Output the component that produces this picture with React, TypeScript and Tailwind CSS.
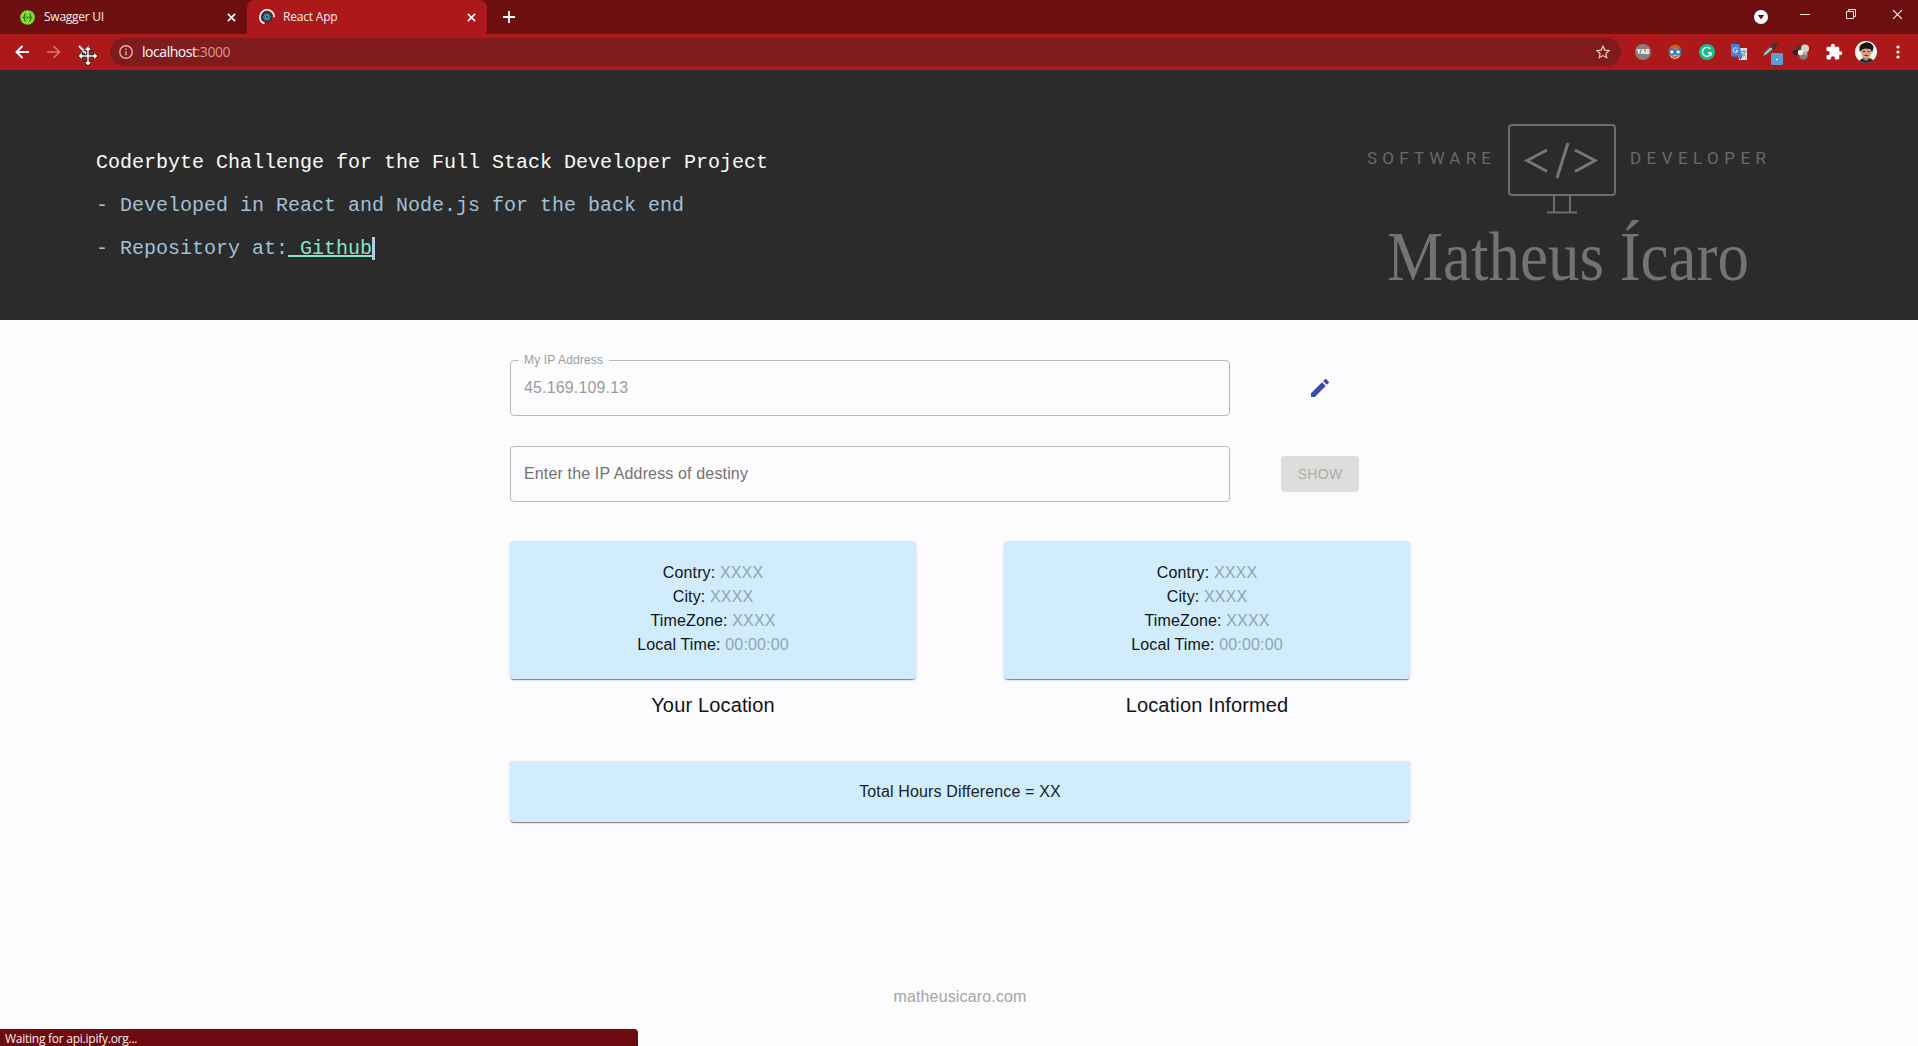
import React from "react";

const UI = "font-['Open_Sans',sans-serif]";

function Cross({ size = 9, width = 1.8 }: { size?: number; width?: number }) {
  return (
    <svg width={size} height={size} viewBox="0 0 10 10" fill="none" stroke="#fff" strokeWidth={width}>
      <path d="M1 1l8 8M9 1L1 9" />
    </svg>
  );
}

function TabStrip() {
  return (
    <div className="flex h-[34px] bg-[#6d0e10] text-[12px] text-[#fbeeee]">
      <div className="flex w-[247px] shrink-0 items-center pl-5">
        <svg className="mr-[9px]" width="15" height="15" viewBox="0 0 15 15">
          <circle cx="7.5" cy="7.5" r="7.3" fill="#7be02f" />
          <path d="M5.8 3.8c-2 0-.6 2.8-2.3 3.7 1.7.9.3 3.7 2.3 3.7M9.2 3.8c2 0 .6 2.8 2.3 3.7-1.7.9-.3 3.7-2.3 3.7" fill="none" stroke="#1d5a25" strokeWidth="1.1" />
          <path d="M5.4 7.5h4.400" stroke="#1d5a25" strokeWidth="1.3" strokeDasharray="1 .7" />
        </svg>
        <span className="w-[183px] tracking-[-0.25px]">Swagger UI</span>
        <Cross />
      </div>
      <div className="relative flex w-[240px] shrink-0 items-center rounded-t-[8px] bg-[#ad191b] pl-[12px]">
        <svg className="mr-[8px]" width="16" height="16" viewBox="0 0 16 16" fill="none">
          <circle cx="8" cy="8" r="5.4" fill="#24303c" />
          <g stroke="#46a7bd" strokeWidth=".8">
            <ellipse cx="8" cy="8" rx="3.8" ry="1.4" />
            <ellipse cx="8" cy="8" rx="3.8" ry="1.4" transform="rotate(60 8 8)" />
            <ellipse cx="8" cy="8" rx="3.8" ry="1.4" transform="rotate(120 8 8)" />
          </g>
          <path d="M5.5 14.6A7.1 7.1 0 0 1 1 7M4 2.1A7.1 7.1 0 0 1 15.1 8.2M1 7A7.1 7.1 0 0 1 4 2.1" stroke="#fff" strokeWidth="1.6" />
        </svg>
        <span className="w-[184px] tracking-[-0.2px]">React App</span>
        <Cross />
      </div>
      <div className="flex flex-1 items-center pl-[16px]">
        <svg width="12" height="12" viewBox="0 0 12 12" stroke="#fff" strokeWidth="1.8">
          <path d="M6 0v12M0 6h12" />
        </svg>
      </div>
      <div className="flex items-start text-white">
        <svg className="mt-[10px] mr-[32px]" width="14" height="14" viewBox="0 0 14 14">
          <circle cx="7" cy="7" r="7" fill="#fff" />
          <path d="M3.8 5h6.4L7 9.4z" fill="#6d0e10" />
        </svg>
        <span className="mt-[14px] mr-[36px] h-px w-[10px] bg-[#ffe9cf]" />
        <svg className="mt-[9px] mr-[36px]" width="10" height="10" viewBox="0 0 10 10" fill="none" stroke="#fde3dc">
          <path d="M.5 2.5h7v7h-7zM2.5 2.5v-2h7v7h-2" />
        </svg>
        <span className="mt-[9px] mr-[15px]">
          <Cross size={11} width={1} />
        </span>
      </div>
    </div>
  );
}

function Extensions() {
  return (
    <div className="flex items-center">
      <span className="flex w-8 justify-center">
        <span className="flex size-4 items-center justify-center rounded-full bg-[#858180] text-[6px] font-extrabold text-white">YAB</span>
      </span>
      <svg className="mx-2" width="16" height="16" viewBox="0 0 16 16">
        <circle cx="8" cy="9" r="6" fill="#e6b184" />
        <path d="M1.6 7C2 2 5 1 9 .8c3 0 5 2.2 5.4 6.2L12 4.6 4 5z" fill="#c26420" />
        <circle cx="4.9" cy="8" r="2.6" fill="#eef6fa" stroke="#2878b8" strokeWidth="1.6" />
        <circle cx="11.1" cy="8" r="2.6" fill="#eef6fa" stroke="#2878b8" strokeWidth="1.6" />
        <path d="M5.5 12.6q2.500 1.500 5 0" stroke="#8a3a28" fill="none" />
      </svg>
      <svg className="mx-2" width="16" height="16" viewBox="0 0 16 16" fill="none">
        <circle cx="8" cy="8" r="8" fill="#15c08c" />
        <path d="M11.300 4.900A4.500 4.500 0 1 0 12.300 9H9M12.300 8.800v2.800" stroke="#fff" strokeWidth="1.400" />
      </svg>
      <svg className="mx-2" width="16" height="16" viewBox="0 0 16 16">
        <path d="M6 4h10v12H8z" fill="#d9dbe0" />
        <path d="M0 0h8l3.500 12.500H0z" fill="#4383e8" />
        <path d="M8 12.500h3.500L9 16z" fill="#2456b0" />
        <path d="M6.300 4.700A2.300 2.300 0 1 0 6.800 6.600H4.800" fill="none" stroke="#fff" />
        <path d="M10.500 7.500h4.500M12.800 6v1.500M14.300 7.500q-.8 3-3 4.500M11.500 9q1 2.200 3 3" fill="none" stroke="#757b84" strokeWidth=".8" />
      </svg>
      <svg className="mr-[6px] ml-[8px] mt-1" width="20" height="22" viewBox="0 0 20 22">
        <path d="M0 13l1-3 6-6 3 2-7 6z" fill="#6aa3a6" />
        <path d="M7 4l4-4h4l-1 3-4 4z" fill="#3c3538" />
        <path d="M2 11l7-6" stroke="#e3eeee" />
        <rect x="8" y="10" width="12" height="12" rx="1.500" fill="#5d9bd3" />
        <path d="M13 16.500h2" stroke="#fff" />
      </svg>
      <svg className="mr-[9px] ml-[3px]" width="17" height="16" viewBox="0 0 17 16">
        <circle cx="11.500" cy="11.500" r="4.300" fill="#85817e" />
        <circle cx="8" cy="5" r="4" fill="#423538" />
        <circle cx="13" cy="4.500" r="4" fill="#d7d4cf" />
        <circle cx="3.500" cy="8.500" r="2.800" fill="#292225" />
        <circle cx="8.500" cy="8.500" r="2.700" fill="#efede9" />
        <circle cx="13.500" cy="9" r="2" fill="#b5b0aa" />
      </svg>
      <svg className="mr-[7px] ml-[7px]" width="18" height="18" viewBox="0 0 24 24" fill="#fff">
        <path d="M20.500 11H19V7c0-1.100-.9-2-2-2h-4V3.500a2.500 2.500 0 0 0-5 0V5H4c-1.100 0-1.990.9-1.990 2v3.800H3.500c1.490 0 2.700 1.210 2.700 2.700s-1.210 2.700-2.700 2.700H2V20c0 1.100.9 2 2 2h3.800v-1.500c0-1.490 1.210-2.700 2.700-2.700 1.490 0 2.700 1.210 2.700 2.700V22H17c1.100 0 2-.9 2-2v-4h1.500a2.500 2.500 0 0 0 0-5z" />
      </svg>
      <svg className="mx-[5px]" width="22" height="22" viewBox="0 0 22 22">
        <clipPath id="avatar">
          <circle cx="11" cy="11" r="11" />
        </clipPath>
        <g clipPath="url(#avatar)">
          <rect width="22" height="22" fill="#f2f3ed" />
          <path d="M4 22q0-4 5-5h5q5 1 5 5z" fill="#25262a" />
          <path d="M8 14h6v4l-3 2-3-2z" fill="#ae8066" />
          <ellipse cx="11.300" cy="11" rx="5.200" ry="6.500" fill="#d0a283" />
          <path d="M5 11Q3 4 8 2.500q6-3 9.500 1.500 2 2-.5 7.500L15.500 8 10 7.500 6.500 9z" fill="#17171a" />
          <path d="M8 10.500h2M12.800 10.500h2M9.500 14.500h3.500" stroke="#46302a" />
        </g>
      </svg>
      <svg className="ml-[14px] mr-[18px]" width="4" height="14" viewBox="0 0 4 14" fill="#fff">
        <circle cx="2" cy="2" r="1.600" />
        <circle cx="2" cy="7" r="1.600" />
        <circle cx="2" cy="12" r="1.600" />
      </svg>
    </div>
  );
}

function Toolbar() {
  return (
    <div className="relative flex h-[36px] items-center bg-[#ad191b]">
      <svg className="ml-[15px]" width="14" height="14" viewBox="0 0 14 14" fill="none" stroke="#fff" strokeWidth="1.900">
        <path d="M14 7H1.500M7.500 1l-6 6 6 6" />
      </svg>
      <svg className="ml-[18px]" width="14" height="14" viewBox="0 0 14 14" fill="none" stroke="#d87778" strokeWidth="1.700">
        <path d="M0 7h12.500M6.500 1l6 6-6 6" />
      </svg>
      <div className="ml-[49px] flex h-[28px] flex-1 items-center rounded-full bg-[#801a1d] pr-[11px] pl-[9px]">
        <svg width="14" height="14" viewBox="0 0 14 14" fill="none" stroke="#e0b5b4" strokeWidth="1.400">
          <circle cx="7" cy="7" r="6.200" />
          <path d="M7 6.200v4M7 3.500v1.500" />
        </svg>
        <span className="ml-[9px] -mt-px text-[14px] tracking-[-0.45px] text-white">
          localhost<span className="text-[#d99793]">:3000</span>
        </span>
        <svg className="ml-auto" width="14" height="14" viewBox="0 0 14 14" fill="none" stroke="#f0cdc9" strokeWidth="1.200">
          <path d="M7 1.200l1.800 3.900 4.200.5-3.100 2.900.8 4.200L7 10.600l-3.700 2.100.8-4.200L1 5.600l4.200-.5z" />
        </svg>
      </div>
      <div className="ml-[6px]">
        <Extensions />
      </div>
      <svg className="absolute top-[11px] left-[77px]" width="22" height="22" viewBox="0 0 22 22">
        <path d="M2 1l10 10M12 1L2 11" stroke="#fff" strokeWidth="1.800" />
        <path d="M11 1l4 4.500h-2.800v4.300h4.300V7L21 11l-4.500 4v-2.800h-4.300v4.300H15L11 21l-4-4.500h2.800v-4.300H5.500V15L1 11l4.500-4v2.800h4.300V5.500H7z" fill="#fff" stroke="#111" strokeWidth=".9" />
      </svg>
    </div>
  );
}

function Logo() {
  return (
    <svg className="mt-5 mr-[136px] ml-auto" width="420" height="180" viewBox="0 0 420 180" fill="#737377">
      <g fontFamily="Roboto, sans-serif" fontSize="17" fill="#69696d">
        <text x="5" y="49" textLength="124">SOFTWARE</text>
        <text x="268" y="49" textLength="136">DEVELOPER</text>
      </g>
      <g fill="none" stroke="#6c6c71" strokeWidth="2">
        <rect x="147" y="10" width="106" height="70" rx="3" />
        <path d="M192 80v17M208 80v17M185 97.500h30" />
      </g>
      <path d="M185 35l-20 10.500 20 11M213 35l20 10.500-20 11M206 28l-11 35" fill="none" stroke="#77777b" strokeWidth="3" />
      <text x="25" y="165" fontFamily="Liberation Serif, serif" fontSize="69" textLength="362" lengthAdjust="spacingAndGlyphs">
        Matheus Ícaro
      </text>
    </svg>
  );
}

function Banner() {
  return (
    <header className="flex h-[250px] items-center bg-[#2b2b2c] pl-24 font-['Liberation_Mono',monospace] text-[20px] leading-[43px] whitespace-pre">
      <div className="pt-[20px]">
        <p className="text-[#fbfbf4]">Coderbyte Challenge for the Full Stack Developer Project</p>
        <p className="text-[#9fc0d8]">- Developed in React and Node.js for the back end</p>
        <p className="flex items-center text-[#9fc0d8]">
          - Repository at:<a className="text-[#86e3c8] underline decoration-2 underline-offset-[1px]"> Github</a>
          <span className="h-[23px] w-[3px] bg-[#a9cfe6]" />
        </p>
      </div>
      <Logo />
    </header>
  );
}

function LocationCard({ title }: { title: string }) {
  const rows = [
    ["Contry", "XXXX"],
    ["City", "XXXX"],
    ["TimeZone", "XXXX"],
    ["Local Time", "00:00:00"],
  ];
  return (
    <section className="w-[406px] text-center">
      <div className="h-[138px] rounded-[4px] bg-[#d0ecfd] pt-[20px] shadow-[0_2px_1px_-1px_rgba(0,0,0,0.3),0_1px_1px_rgba(0,0,0,0.2),0_1px_3px_rgba(0,0,0,0.12)]">
        {rows.map(([label, value]) => (
          <p key={label} className="leading-6">
            {label}: <span className="text-[#8fa5b1]">{value}</span>
          </p>
        ))}
      </div>
      <h2 className="mt-[10px] text-[20px] leading-8 tracking-[0.15px]">{title}</h2>
    </section>
  );
}

export default function App() {
  return (
    <div className={`relative flex h-[1046px] w-full flex-col overflow-hidden bg-[#fcfcfe] ${UI}`}>
      <TabStrip />
      <Toolbar />
      <Banner />
      <main className="mt-10 ml-[510px] w-[900px] font-['Liberation_Sans',Arial,sans-serif] text-base tracking-[0.15px] text-[#17232a]">
        <div className="flex h-14 items-center">
          <fieldset className="relative flex h-14 w-[720px] items-center rounded-[4px] border border-[#b9b9b9] pl-[13px] text-[#9c9c98]">
            <span className="absolute -top-[9px] left-[8px] bg-[#fcfcfe] px-[5px] pr-[6px] text-[12px] leading-4">My IP Address</span>
            45.169.109.13
          </fieldset>
          <svg className="ml-[78px]" width="24" height="24" viewBox="0 0 24 24" fill="#3f47a8">
            <path d="M3 17.250V21h3.750L17.810 9.940l-3.750-3.750L3 17.250zM20.710 7.040a1 1 0 0 0 0-1.410l-2.340-2.340a1 1 0 0 0-1.410 0l-1.830 1.830 3.750 3.750 1.830-1.830z" />
          </svg>
        </div>
        <div className="mt-[30px] flex h-14 items-center">
          <div className="flex h-14 w-[720px] items-center rounded-[4px] border border-[#b9b9b9] pl-[13px] text-[#73736f]">
            Enter the IP Address of destiny
          </div>
          <button className="ml-[51px] h-[36px] w-[78px] rounded-[4px] bg-[#dddddb] text-[14px] tracking-[0.4px] text-[#acacaa]">SHOW</button>
        </div>
        <div className="mt-[39px] flex justify-between text-[#101315]">
          <LocationCard title="Your Location" />
          <LocationCard title="Location Informed" />
        </div>
        <div className="mt-[40px] flex h-[61px] items-center justify-center rounded-[4px] bg-[#d0ecfd] shadow-[0_2px_1px_-1px_rgba(0,0,0,0.3),0_1px_1px_rgba(0,0,0,0.2),0_1px_3px_rgba(0,0,0,0.12)]">
          Total Hours Difference = XX
        </div>
        <footer className="mt-[163px] text-center leading-6 text-[#a5a5a0]">matheusicaro.com</footer>
      </main>
      <div className="absolute bottom-0 left-0 flex h-[17px] w-[638px] items-start rounded-tr-[4px] bg-[#6d0b10] pl-[5px] text-[12px] leading-[19px] tracking-[-0.25px] whitespace-nowrap text-[#fbeeee]">
        Waiting for api.ipify.org...
      </div>
    </div>
  );
}
